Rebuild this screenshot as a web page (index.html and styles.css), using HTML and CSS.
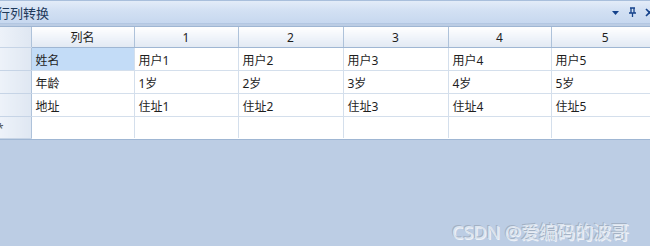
FILE: index.html
```html
<!DOCTYPE html>
<html lang="zh-CN">

<head>
    <meta charset="UTF-8">
    <title>行列转换</title>
    <link rel="stylesheet" href="styles.css">
</head>

<body>
    <div class="panel">
        <div class="caption">
            <span class="caption-text">行列转换</span>
            <div class="caption-buttons">
                <svg width="9" height="9" viewBox="0 0 9 9"><path d="M1 3h7L4.5 7z" fill="#15428b"/></svg>
                <svg width="9" height="10" viewBox="0 0 9 10"><path d="M2 1h5M3 1v5M6 1v5M1 6h7M4.5 6v4" stroke="#15428b" stroke-width="1.3" fill="none"/></svg>
                <svg width="9" height="9" viewBox="0 0 9 9"><path d="M1 1l7 7M8 1l-7 7" stroke="#15428b" stroke-width="1.6"/></svg>
            </div>
        </div>
        <div class="grid-wrap">
            <table class="grid">
                <colgroup>
                    <col class="c-ind">
                    <col class="c-name">
                    <col class="c-1">
                    <col class="c-2">
                    <col class="c-3">
                    <col class="c-4">
                    <col class="c-5">
                </colgroup>
                <thead>
                    <tr>
                        <th class="ind"></th>
                        <th>列名</th>
                        <th>1</th>
                        <th>2</th>
                        <th>3</th>
                        <th>4</th>
                        <th>5</th>
                    </tr>
                </thead>
                <tbody>
                    <tr>
                        <td class="ind"></td>
                        <td class="focused">姓名</td>
                        <td>用户1</td>
                        <td>用户2</td>
                        <td>用户3</td>
                        <td>用户4</td>
                        <td>用户5</td>
                    </tr>
                    <tr>
                        <td class="ind"></td>
                        <td>年龄</td>
                        <td>1岁</td>
                        <td>2岁</td>
                        <td>3岁</td>
                        <td>4岁</td>
                        <td>5岁</td>
                    </tr>
                    <tr>
                        <td class="ind"></td>
                        <td>地址</td>
                        <td>住址1</td>
                        <td>住址2</td>
                        <td>住址3</td>
                        <td>住址4</td>
                        <td>住址5</td>
                    </tr>
                    <tr class="new-row">
                        <td class="ind"><span class="star">*</span></td>
                        <td></td>
                        <td></td>
                        <td></td>
                        <td></td>
                        <td></td>
                        <td></td>
                    </tr>
                </tbody>
            </table>
        </div>
        <div class="watermark">CSDN @爱编码的波哥</div>
    </div>
</body>

</html>
```

FILE: styles.css
```css
body {
    margin: 0;
    font-family: "Noto Sans", "Noto Sans CJK SC", sans-serif;
    font-size: 12px;
    color: #1e1e1e;
    background-color: #bccde4;
    overflow: hidden;
}

.panel {
    width: 650px;
    height: 246px;
    position: relative;
    overflow: hidden;
    background-color: #bccde4;
}

.caption {
    height: 22px;
    display: flex;
    align-items: center;
    justify-content: space-between;
    background: linear-gradient(#e3ecf8, #d2e0f3 45%, #c7d8ef);
    border-top: 1px solid #a9bfdc;
    border-bottom: 1px solid #b3c7e2;
}

.caption-text {
    margin-left: -3px;
    font-size: 13px;
    color: #1e395b;
}

.caption-buttons {
    display: flex;
    align-items: center;
    gap: 8px;
    margin-right: -4px;
}

.grid-wrap {
    margin-top: 2px;
    background: #ffffff;
    border-top: 1px solid #9fb6d3;
    border-bottom: 1px solid #9fb6d3;
}

.grid {
    border-collapse: collapse;
    table-layout: fixed;
    width: 660px;
}

.c-ind {
    width: 31px;
}

.c-name {
    width: 103px;
}

.c-1 {
    width: 104px;
}

.c-2,
.c-3 {
    width: 105px;
}

.c-4 {
    width: 103px;
}

.grid th {
    height: 20px;
    padding: 0;
    font-weight: normal;
    text-align: center;
    background: linear-gradient(#ffffff, #f0f4fa 50%, #e2e9f3);
    border-right: 1px solid #aec2da;
    border-bottom: 1px solid #9fb6d3;
}

.grid td {
    height: 21px;
    padding: 1px 0 0 4px;
    border-right: 1px solid #d4dfec;
    border-bottom: 1px solid #d4dfec;
    white-space: nowrap;
    overflow: hidden;
}

.grid .ind {
    padding: 0;
    background: linear-gradient(90deg, #edf2f9, #dfe7f2);
    border-right: 1px solid #aec2da;
    border-bottom: 1px solid #c6d4e6;
}

.grid td.focused {
    background-color: #c3dcf7;
}

.new-row td {
    height: 20px;
    border-bottom: none;
}

.star {
    display: block;
    margin-left: -3px;
    margin-top: 3px;
    color: #555555;
}

.watermark {
    position: absolute;
    left: 452px;
    top: 218px;
    font-size: 18px;
    color: #dde5ef;
    text-shadow: -1px -1px 0 #a3b1c4, 1px 1px 0 #eef2f8;
}
```
